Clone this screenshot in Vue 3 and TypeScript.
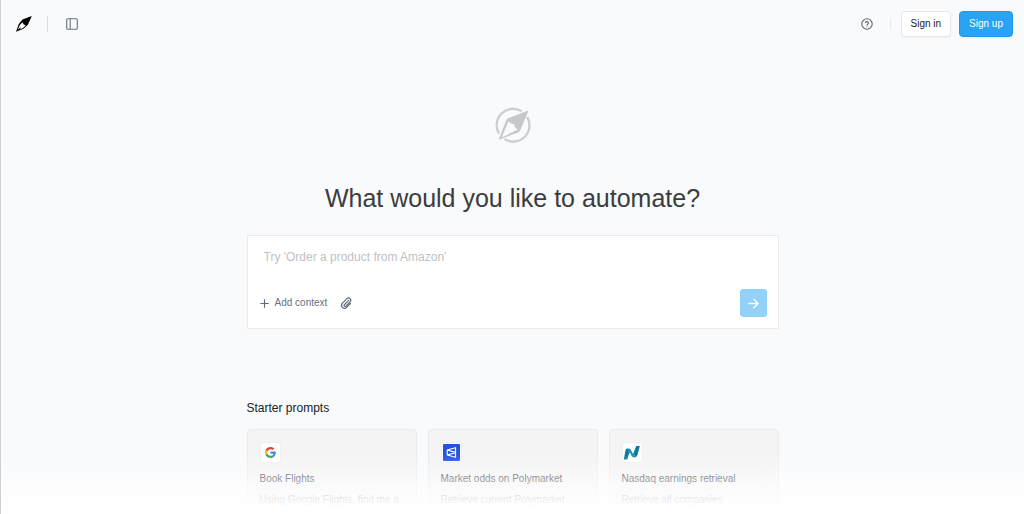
<script setup lang="ts">
import { ref } from 'vue'

interface Prompt {
  icon: 'google' | 'polymarket' | 'nasdaq'
  title: string
  text: string
}

const prompts: Prompt[] = [
  { icon: 'google', title: 'Book Flights', text: 'Using Google Flights, find me a' },
  { icon: 'polymarket', title: 'Market odds on Polymarket', text: 'Retrieve current Polymarket' },
  { icon: 'nasdaq', title: 'Nasdaq earnings retrieval', text: 'Retrieve all companies' },
]

const task = ref('')
</script>

<template>
  <div class="page">
    <header class="topbar">
      <a class="logo" href="#" aria-label="Home">
        <svg width="18" height="18" viewBox="0 0 18 18">
          <path d="M16.800 1 7.500 4.600 3.800 9 1 16.800 8.500 13.800 12.900 9.800z" fill="#000" />
          <path d="M7.600 7.200 4.900 9.900 2.800 14.600 5.900 12.300 5.100 14.200 8 12.900 10.800 10.300 8.700 9.500z" fill="#f8fafc" />
        </svg>
      </a>
      <span class="rule rule-start"></span>
      <button class="icon-button" type="button" aria-label="Toggle sidebar">
        <svg width="12" height="12" viewBox="0 0 12 12" fill="none" stroke="#64707f" stroke-width="1.1">
          <rect x=".7" y=".7" width="10.6" height="10.6" rx="1.3" />
          <path d="M4.2.7v10.6" />
        </svg>
      </button>
      <div class="account">
        <button class="icon-button" type="button" aria-label="Help">
          <svg width="12" height="12" viewBox="0 0 24 24" fill="none" stroke="#5f6975" stroke-width="2.2" stroke-linecap="round">
            <circle cx="12" cy="12" r="10.4" />
            <path d="M9 9.2a3.1 3.1 0 0 1 6 1c0 2-3 2.4-3 4M12 17.4v.1" />
          </svg>
        </button>
        <span class="rule rule-faint"></span>
        <button class="button" type="button">Sign in</button>
        <button class="button button-primary" type="button">Sign up</button>
      </div>
    </header>

    <main class="content">
      <svg class="emblem" width="36" height="36" viewBox="0 0 36 36" fill="none">
        <path d="M4 26.500A16.300 16.300 0 0 1 26.500 4.200M32.200 10A16.300 16.300 0 0 1 9.500 32.100" stroke="#cbcdce" stroke-width="2.300" />
        <path fill-rule="evenodd" d="M33.500 3.500 13 11.200Q11.800 11.700 11.300 12.900L3.500 33 23.500 25.200Q24.700 24.700 25.200 23.500zM13.600 14.200Q16.200 18.200 19.100 16.400Q18.900 20.500 22.800 22.600L6.500 30.500z" fill="#c6c8c9" />
      </svg>
      <h1>What would you like to automate?</h1>

      <form class="composer" @submit.prevent>
        <input v-model="task" type="text" aria-label="Task" placeholder="Try 'Order a product from Amazon'" />
        <div class="tools">
          <button class="context" type="button">
            <svg width="9" height="9" viewBox="0 0 9 9" stroke="#5f6975" stroke-width="1.1">
              <path d="M4.5.3v8.4M.3 4.5h8.4" />
            </svg>
            Add context
          </button>
          <button class="icon-button" type="button" aria-label="Attach file">
            <svg width="12" height="12" viewBox="0 0 24 24" fill="none" stroke="#5f6975" stroke-width="2.4" stroke-linecap="round" stroke-linejoin="round">
              <path d="m18 8-8.6 8.6a2 2 0 0 0 2.9 2.9l8.4-8.5a4.4 4.4 0 0 0-6.2-6.3l-9 9.1a5.8 5.8 0 0 0 8.3 8.2l7.5-7.6" transform="translate(-.6 -1.4)" />
            </svg>
          </button>
          <button class="send" type="submit" aria-label="Send">
            <svg width="11" height="11" viewBox="0 0 11 11" fill="none" stroke="#fff" stroke-width="1.3" stroke-linecap="round" stroke-linejoin="round">
              <path d="M.8 5.5h9.2M5.8 1.2l4.3 4.3-4.3 4.3" />
            </svg>
          </button>
        </div>
      </form>

      <section class="starters">
        <h2>Starter prompts</h2>
        <div class="cards">
          <article v-for="prompt in prompts" :key="prompt.title" class="card">
            <span class="brand">
              <svg v-if="prompt.icon === 'google'" width="11" height="11" viewBox="0 0 48 48">
                <path fill="#ea4335" d="M24 9.5c3.5 0 6.700 1.200 9.200 3.600l6.900-6.900C35.900 2.400 30.500 0 24 0 14.600 0 6.500 5.400 2.600 13.200l8 6.200C12.400 13.700 17.700 9.500 24 9.500z" />
                <path fill="#4285f4" d="M47 24.500c0-1.600-.2-3.100-.4-4.500H24v9h12.900c-.6 3-2.300 5.500-4.800 7.200l7.700 6C44.400 38 47 31.800 47 24.500z" />
                <path fill="#fbbc05" d="M10.500 28.600A14.500 14.500 0 0 1 10.500 19.400l-8-6.200a24 24 0 0 0 0 21.600z" />
                <path fill="#34a853" d="M24 48c6.500 0 11.900-2.100 15.900-5.800l-7.700-6c-2.200 1.500-4.900 2.300-8.200 2.300-6.300 0-11.600-4.200-13.500-9.900l-8 6.200C6.500 42.600 14.600 48 24 48z" />
              </svg>
              <svg v-else-if="prompt.icon === 'polymarket'" width="17" height="17" viewBox="0 0 16 16">
                <rect width="16" height="16" rx="1" fill="#2253df" />
                <path d="M11.800 3.500v9L4 10.300V5.700zM11.800 7.900 4 5.700M11.800 8.100 4 10.300" fill="none" stroke="#fff" stroke-width="1.100" stroke-linejoin="round" />
              </svg>
              <svg v-else width="18" height="16" viewBox="0 0 18 16">
                <path d="M4.300 3.500Q2.900 3.800 2.500 5.200L.8 14.500h3.400L7 5.500z" fill="#087b9e" />
                <path d="M13.200 1h3.600L14.500 10Q14 12 12.200 12.300L10.500 8z" fill="#087b9e" />
                <path d="M4.300 3.500Q7.300 3 8.300 5.500L9.300 8Q10.200 9 11 7.500L12.200 12.300Q9.400 12.800 8.200 10.200L7 7.500 6 8.500z" fill="#1594b8" />
              </svg>
            </span>
            <h3>{{ prompt.title }}</h3>
            <p>{{ prompt.text }}</p>
          </article>
        </div>
      </section>
    </main>
    <div class="fade"></div>
  </div>
</template>

<style>
body {
  background: #f8fafc;
}
</style>

<style scoped>
.page {
  position: relative;
  box-sizing: border-box;
  height: 100vh;
  overflow: hidden;
  border-left: 1px solid #cfd0d2;
  background: #f8fafc;
  color: #202124;
  font-family: "Liberation Sans", Arial, sans-serif;
  font-size: 10px;
  line-height: 16px;
}

h1,
h2,
h3,
p {
  margin: 0;
  font-weight: 400;
}

svg {
  display: block;
  flex: none;
}

button,
input {
  margin: 0;
  padding: 0;
  border: 0;
  background: none;
  color: inherit;
  font: inherit;
}

.topbar {
  display: flex;
  align-items: center;
  height: 48px;
  padding: 0 11px 0 14px;
}

.rule {
  width: 1px;
  height: 16px;
  background: #d9dce0;
}

.rule-start {
  margin: 0 12px 0 14px;
}

.icon-button {
  display: grid;
  place-items: center;
  width: 24px;
  height: 24px;
}

.account {
  display: flex;
  align-items: center;
  gap: 8px;
  margin-left: auto;
}

.rule-faint {
  height: 12px;
  margin: 0 2px 0 3px;
  background: #e8ebee;
}

.button {
  box-sizing: border-box;
  height: 26px;
  padding: 0 9px;
  border: 1px solid #e5e7ea;
  border-radius: 4px;
  background: #fff;
  box-shadow: 0 1px 2px #0000000d;
}

.button-primary {
  border-color: #2597e8;
  background: #29a3f3;
  color: #fff;
}

.content {
  display: flex;
  flex-direction: column;
  align-items: center;
  max-width: 532px;
  margin: 0 auto;
  padding-top: 59px;
}

h1 {
  margin-top: 39px;
  color: #3b3c3e;
  font-size: 25px;
  line-height: 32px;
  white-space: nowrap;
}

.composer {
  box-sizing: border-box;
  width: 100%;
  margin-top: 21px;
  padding: 12px 11px 11px 12px;
  border: 1px solid #e8ebef;
  background: #fff;
}

.composer input {
  box-sizing: border-box;
  display: block;
  width: 100%;
  height: 18px;
  padding: 0 4px;
  outline: 0;
  font-size: 12px;
}

.composer input::placeholder {
  color: #bfc1c3;
  opacity: 1;
}

.tools {
  display: flex;
  align-items: center;
  gap: 7px;
  margin-top: 23px;
}

.context {
  display: flex;
  align-items: center;
  gap: 6px;
  color: #68717d;
}

.send {
  display: grid;
  place-items: center;
  width: 27px;
  height: 28px;
  margin-left: auto;
  border-radius: 3px;
  background: #94d1f9;
}

.starters {
  width: 100%;
  margin-top: 71px;
}

h2 {
  font-size: 12px;
}

.cards {
  display: grid;
  grid-template-columns: repeat(3, 1fr);
  gap: 11px;
  margin-top: 13px;
}

.card {
  height: 100px;
  padding: 12px;
  border: 1px solid #e9ebed;
  border-radius: 4px;
  background: #f4f4f5;
}

.brand {
  display: grid;
  place-items: center;
  box-sizing: border-box;
  width: 21px;
  height: 21px;
  border: 1px solid #eceef0;
  border-radius: 3px;
  background: #fff;
}

h3 {
  margin-top: 8px;
  color: #404145;
  font-size: 10px;
}

.card p {
  margin-top: 5px;
  color: #7c7d80;
  white-space: nowrap;
}

.fade {
  position: absolute;
  right: 0;
  bottom: 0;
  left: 0;
  height: 60px;
  background: linear-gradient(to bottom, #ffffff00, #fff 90%);
  pointer-events: none;
}
</style>
